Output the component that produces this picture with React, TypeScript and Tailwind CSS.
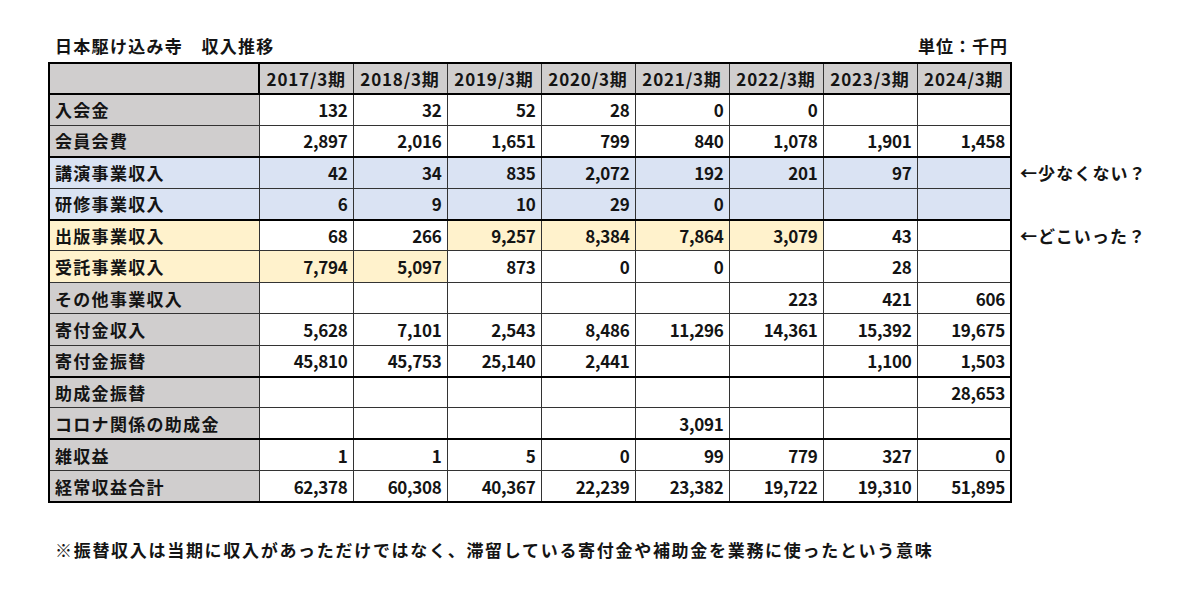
import React from "react";

type Tone = "w" | "b" | "y";

interface Row {
  label: string;
  labelTone: "g" | "b" | "y";
  values: string[];
  tones?: Tone[];
  thickTop?: boolean;
  note?: string;
}

const years = ["2017", "2018", "2019", "2020", "2021", "2022", "2023", "2024"];

const rows: Row[] = [
  { label: "入会金", labelTone: "g", values: ["132", "32", "52", "28", "0", "0", "", ""] },
  { label: "会員会費", labelTone: "g", values: ["2,897", "2,016", "1,651", "799", "840", "1,078", "1,901", "1,458"] },
  {
    label: "講演事業収入",
    labelTone: "b",
    values: ["42", "34", "835", "2,072", "192", "201", "97", ""],
    tones: ["b", "b", "b", "b", "b", "b", "b", "b"],
    thickTop: true,
    note: "←少なくない？",
  },
  {
    label: "研修事業収入",
    labelTone: "b",
    values: ["6", "9", "10", "29", "0", "", "", ""],
    tones: ["b", "b", "b", "b", "b", "b", "b", "b"],
  },
  {
    label: "出版事業収入",
    labelTone: "y",
    values: ["68", "266", "9,257", "8,384", "7,864", "3,079", "43", ""],
    tones: ["w", "w", "y", "y", "y", "y", "w", "w"],
    thickTop: true,
    note: "←どこいった？",
  },
  {
    label: "受託事業収入",
    labelTone: "y",
    values: ["7,794", "5,097", "873", "0", "0", "", "28", ""],
    tones: ["y", "y", "w", "w", "w", "w", "w", "w"],
  },
  { label: "その他事業収入", labelTone: "g", values: ["", "", "", "", "", "223", "421", "606"] },
  { label: "寄付金収入", labelTone: "g", values: ["5,628", "7,101", "2,543", "8,486", "11,296", "14,361", "15,392", "19,675"] },
  { label: "寄付金振替", labelTone: "g", values: ["45,810", "45,753", "25,140", "2,441", "", "", "1,100", "1,503"] },
  { label: "助成金振替", labelTone: "g", values: ["", "", "", "", "", "", "", "28,653"], thickTop: true },
  { label: "コロナ関係の助成金", labelTone: "g", values: ["", "", "", "", "3,091", "", "", ""] },
  { label: "雑収益", labelTone: "g", values: ["1", "1", "5", "0", "99", "779", "327", "0"], thickTop: true },
  { label: "経常収益合計", labelTone: "g", values: ["62,378", "60,308", "40,367", "22,239", "23,382", "19,722", "19,310", "51,895"] },
];

const labelBg = { g: "bg-[#d0cece]", b: "bg-[#dae3f3]", y: "bg-[#fff2cc]" };
const cellBg = { w: "bg-white", b: "bg-[#dae3f3]", y: "bg-[#fff2cc]" };

export default function App() {
  return (
    <div
      className="min-h-screen w-[1200px] bg-white pt-[36px] pl-[48px] font-bold text-[#141414]"
      style={{ fontFamily: '"Noto Sans CJK JP", "Noto Sans", sans-serif' }}
    >
      <div className="flex w-[962px] items-end justify-between pl-[7px] pr-[2px] pb-[6px] text-[17px] leading-[20px]">
        <span className="tracking-[1.3px]">日本駆け込み寺　収入推移</span>
        <span className="tracking-[1px]">単位：千円</span>
      </div>

      <table className="border-collapse text-[17px] leading-none">
        <thead>
          <tr className="h-[31px]">
            <th className="w-[210px] border-2 border-black bg-[#d0cece]" />
            {years.map((y, i) => (
              <th
                key={y}
                className={`w-[94px] border border-b-2 border-t-2 border-[#333] border-b-black border-t-black bg-[#d0cece] text-center font-bold tracking-[0.8px] ${
                  i === years.length - 1 ? "border-r-2 border-r-black" : ""
                }`}
              >
                {y}/3期
              </th>
            ))}
            <th className="border-0 bg-white" />
          </tr>
        </thead>
        <tbody>
          {rows.map((r, ri) => {
            const last = ri === rows.length - 1;
            const top = r.thickTop ? "border-t-2 border-t-black" : "";
            const bottom = last ? "border-b-2 border-b-black" : "";
            return (
              <tr key={r.label} className="h-[31.4px]">
                <td
                  className={`border border-l-2 border-[#333] border-l-black pl-[5px] text-left tracking-[1.3px] ${labelBg[r.labelTone]} ${top} ${bottom}`}
                >
                  {r.label}
                </td>
                {r.values.map((v, i) => (
                  <td
                    key={i}
                    className={`border border-[#333] pr-[5px] text-right tracking-[-0.3px] ${
                      cellBg[r.tones ? r.tones[i] : "w"]
                    } ${top} ${bottom} ${i === r.values.length - 1 ? "border-r-2 border-r-black" : ""}`}
                  >
                    {v}
                  </td>
                ))}
                <td className="border-0 bg-white pl-[8px] whitespace-nowrap tracking-[1.1px]">
                  {r.note ?? ""}
                </td>
              </tr>
            );
          })}
        </tbody>
      </table>

      <p className="mt-[37px] pl-[7px] text-[17px] leading-[20px] tracking-[1.7px]">
        ※振替収入は当期に収入があっただけではなく、滞留している寄付金や補助金を業務に使ったという意味
      </p>
    </div>
  );
}
